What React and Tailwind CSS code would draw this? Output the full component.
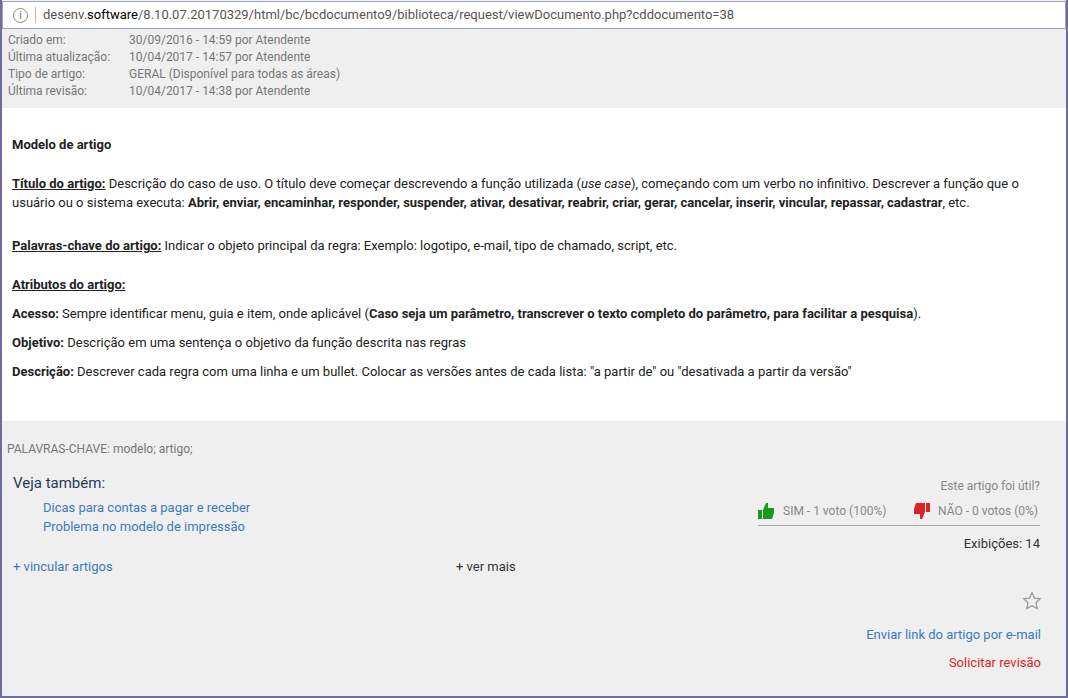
export default function App() {
  const f = { fontFamily: "Roboto, 'Liberation Sans', sans-serif" };
  return (
    <div style={f} className="w-[1068px] h-[698px] bg-[#6f6aa0] p-[2px] pt-0 overflow-hidden">
      <div className="h-full bg-[#efefef] flex flex-col">
        <div className="h-[28px] bg-white border border-[#9aa6c0] flex items-center text-[13px] text-[#555] mt-[1px]">
          <span className="w-[15px] h-[15px] ml-[10px] rounded-full border border-[#888] text-[10px] flex items-center justify-center text-[#666]">i</span>
          <span className="w-px h-[16px] bg-[#bbb] mx-[7px]"></span>
          <span>desenv.<span className="text-black">software</span>/8.10.07.20170329/html/bc/bcdocumento9/biblioteca/request/viewDocumento.php?cddocumento=38</span>
        </div>
        <div className="px-[6px] pt-[3px] pb-[8px] text-[12px] text-[#777] leading-[17px]">
          {[["Criado em:", "30/09/2016 - 14:59 por Atendente"], ["Última atualização:", "10/04/2017 - 14:57 por Atendente"], ["Tipo de artigo:", "GERAL (Disponível para todas as áreas)"], ["Última revisão:", "10/04/2017 - 14:38 por Atendente"]].map(([a, b]) => (
            <div key={a} className="flex"><span className="w-[121px]">{a}</span><span>{b}</span></div>
          ))}
        </div>
        <div className="bg-white px-[10px] pt-[27px] text-[13px] text-[#222] leading-[19px] h-[313px]">
          <p className="font-bold">Modelo de artigo</p>
          <p className="mt-[20px]"><b className="underline">Título do artigo:</b> Descrição do caso de uso. O título deve começar descrevendo a função utilizada (<i>use case</i>), começando com um verbo no infinitivo. Descrever a função que o usuário ou o sistema executa: <b>Abrir, enviar, encaminhar, responder, suspender, ativar, desativar, reabrir, criar, gerar, cancelar, inserir, vincular, repassar, cadastrar</b>, etc.</p>
          <p className="mt-[24px]"><b className="underline">Palavras-chave do artigo:</b> Indicar o objeto principal da regra: Exemplo: logotipo, e-mail, tipo de chamado, script, etc.</p>
          <p className="mt-[20px] font-bold underline">Atributos do artigo:</p>
          <p className="mt-[10px]"><b>Acesso:</b> Sempre identificar menu, guia e item, onde aplicável (<b>Caso seja um parâmetro, transcrever o texto completo do parâmetro, para facilitar a pesquisa</b>).</p>
          <p className="mt-[10px]"><b>Objetivo:</b> Descrição em uma sentença o objetivo da função descrita nas regras</p>
          <p className="mt-[10px]"><b>Descrição:</b> Descrever cada regra com uma linha e um bullet. Colocar as versões antes de cada lista: "a partir de" ou "desativada a partir da versão"</p>
        </div>
        <div className="px-[5px] pt-[19px] text-[12px] text-[#777]">PALAVRAS-CHAVE: modelo; artigo;</div>
        <div className="flex justify-between px-[11px] pr-[26px] mt-[14px]">
          <div>
            <div className="text-[15px] text-[#1f3c5c]">Veja também:</div>
            <div className="pl-[30px] mt-[3px] text-[13px] text-[#3a7cc0] leading-[19px]">
              <div>Dicas para contas a pagar e receber</div>
              <div>Problema no modelo de impressão</div>
            </div>
          </div>
          <div className="flex flex-col items-end text-[12px] text-[#888]">
            <div className="mt-[5px]">Este artigo foi útil?</div>
            <div className="w-[282px] mt-[7px] pb-[5px] border-b border-[#aaa] flex items-center justify-between pl-0 pr-[2px]">
              <span className="flex items-center gap-[8px]">
                <svg width="17" height="16" viewBox="0 0 17 16"><path d="M0 7h4v9H0z M5 7l3-7h2v5h6v5l-2 6H5z" fill="#1a9a1a"/></svg>
                SIM - 1 voto (100%)
              </span>
              <span className="flex items-center gap-[8px]">
                <svg width="17" height="16" viewBox="0 0 17 16"><path d="M13 0h4v9h-4z M12 9l-3 7H7v-5H1V6l2-6h9z" fill="#e0202a"/></svg>
                NÃO - 0 votos (0%)
              </span>
            </div>
            <div className="mt-[8px] text-[13px] text-[#333]">Exibições: 14</div>
          </div>
        </div>
        <div className="flex px-[11px] mt-[3px] text-[13px]">
          <span className="text-[#3a7cc0] w-[443px]">+ vincular artigos</span>
          <span className="text-[#333]">+ ver mais</span>
        </div>
        <div className="flex flex-col items-end pr-[25px] text-[13px]">
          <svg className="mt-[15px] mr-[-1px]" width="20" height="20" viewBox="0 0 24 24" fill="none" stroke="#999" strokeWidth="1.5"><path d="M12 2l3 6.5 7 .8-5.2 4.8 1.4 7L12 17.6 5.8 21l1.4-7L2 9.3l7-.8z"/></svg>
          <div className="mt-[14px] text-[#3a7cc0]">Enviar link do artigo por e-mail</div>
          <div className="mt-[8px] text-[#e52222]">Solicitar revisão</div>
        </div>
      </div>
    </div>
  );
}
